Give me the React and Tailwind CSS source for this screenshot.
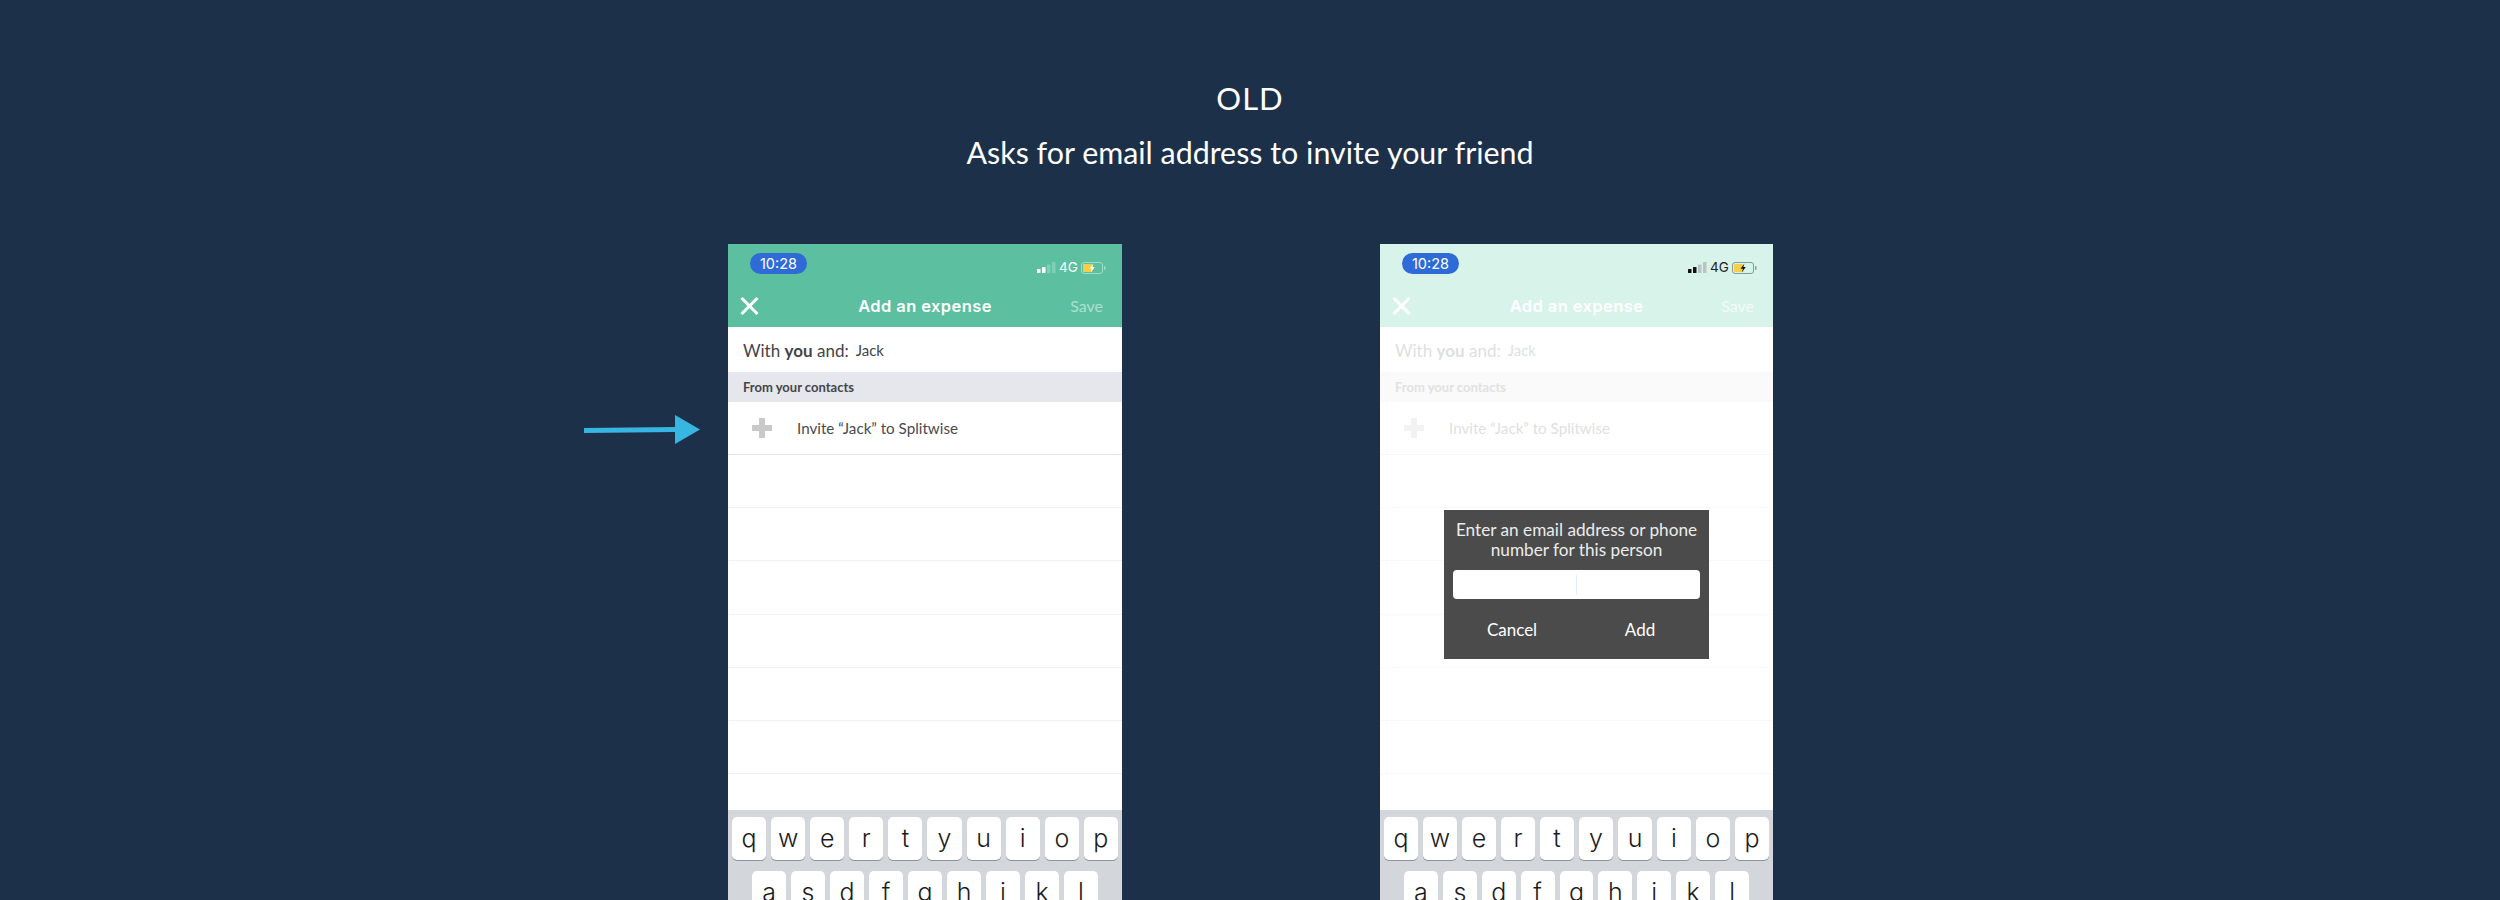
const ROW_ONE = ["q", "w", "e", "r", "t", "y", "u", "i", "o", "p"];
const ROW_TWO = ["a", "s", "d", "f", "g", "h", "j", "k", "l"];
const EMPTY_ROWS = [1, 2, 3, 4, 5, 6];

const Arrow = () => (
  <svg width="118" height="30" viewBox="0 0 118 30" className="mt-[171px] shrink-0">
    <polygon points="0,13 92,12 92,17 0,18" fill="#38b6e2" />
    <polygon points="91,0 116,14.5 91,29" fill="#38b6e2" />
  </svg>
);

const StatusIcons = ({ faded }) => {
  const main = faded ? "#111111" : "#ffffff";
  const dim = faded ? "#b9c4c0" : "#7fd0b6";
  const outline = faded ? "#8b9a94" : "#9ddcc7";
  return (
    <div className="flex items-center">
      <svg width="19" height="12" viewBox="0 0 19 12">
        <rect x="0" y="7" width="3.5" height="4" rx="0.5" fill={main} />
        <rect x="5" y="5" width="3.5" height="6" rx="0.5" fill={main} />
        <rect x="10" y="2.5" width="3.5" height="8.5" rx="0.5" fill={dim} />
        <rect x="15" y="0" width="3.5" height="11" rx="0.5" fill={dim} />
      </svg>
      <span className={`ml-[3px] w-[19px] font-[Inter,sans-serif] text-[13.5px] leading-none ${faded ? "text-[#222222]" : "text-white"}`}>
        4G
      </span>
      <svg width="25" height="12" viewBox="0 0 25 12" className="ml-[3px]">
        <rect x="0.5" y="0.5" width="21" height="11" rx="2.5" fill="none" stroke={outline} />
        <rect x="2" y="2" width="9.5" height="8" rx="1" fill="#f7cf47" />
        <rect x="23" y="4" width="1.5" height="4" rx="0.7" fill={outline} />
        <polygon points="12.5,1.5 8.5,6.8 11,6.8 9.7,10.5 13.8,5 11.3,5" fill={main} />
      </svg>
    </div>
  );
};

const Key = ({ label }) => (
  <div className="flex h-[43px] flex-1 items-center justify-center rounded-[5px] bg-white pb-[1px] font-[Inter,sans-serif] text-[25px] font-light leading-none text-[#1c1c1e] shadow-[0_1px_0_#8f9296]">
    {label}
  </div>
);

const Phone = ({ faded }) => (
  <div className={`relative flex h-[656px] shrink-0 flex-col bg-white ${faded ? "w-[393px]" : "w-[394px]"}`}>
    {/* Green header */}
    <div className={`h-[83px] pt-[9px] ${faded ? "bg-[#d8f3ea]" : "bg-[#5cbf9f]"}`}>
      <div className="flex h-[21px] items-center justify-between pl-[22px] pr-[16px]">
        <div className="flex h-[21px] w-[57px] items-center justify-center rounded-full bg-[#2e6bd6] font-[Inter,sans-serif] text-[14.5px] text-white">
          10:28
        </div>
        <div className="mt-[9px]">
          <StatusIcons faded={faded} />
        </div>
      </div>

      <div className="mt-[14px] grid h-[36px] grid-cols-[1fr_auto_1fr] items-center">
        <div className="pl-[12px]">
          <svg width="19" height="18" viewBox="0 0 19 18">
            <path d="M1.5 1 L17.5 17 M17.5 1 L1.5 17" stroke="#ffffff" strokeWidth="3" fill="none" />
          </svg>
        </div>
        <div className="font-[Inter,sans-serif] text-[16.5px] font-semibold tracking-[0.4px] text-white">
          Add an expense
        </div>
        <div className={`pr-[19px] text-right font-[Lato,sans-serif] text-[16px] ${faded ? "text-white/70" : "text-white/50"}`}>
          Save
        </div>
      </div>
    </div>

    {/* Contact search */}
    <div className={`flex h-[45px] items-center pl-[15px] pt-[2px] font-[Lato,sans-serif] ${faded ? "text-[#dfdfdf]" : "text-[#444448]"}`}>
      <span className="text-[17px]">
        With <span className="font-bold">you</span> and:
      </span>
      <span className="ml-[7px] text-[15px]">Jack</span>
    </div>

    <div className={`flex h-[30px] items-center pl-[15px] pt-[2px] font-[Lato,sans-serif] text-[13px] font-bold ${faded ? "bg-[#fafafa] text-[#e2e2e2]" : "bg-[#e6e7ec] text-[#45454a]"}`}>
      From your contacts
    </div>

    <div className={`flex h-[53px] items-center border-b pl-[24px] ${faded ? "border-[#f7f7f7]" : "border-[#e6e6f0]"}`}>
      <svg width="20" height="20" viewBox="0 0 20 20" className="shrink-0">
        <path d="M7 0 H13 V7 H20 V13 H13 V20 H7 V13 H0 V7 H7 Z" fill={faded ? "#f2f2f2" : "#c9c9c9"} />
      </svg>
      <span className={`ml-[25px] font-[Lato,sans-serif] text-[15.2px] ${faded ? "text-[#dfdfdf]" : "text-[#4a4a4e]"}`}>
        Invite “Jack” to Splitwise
      </span>
    </div>

    {EMPTY_ROWS.map((row) => (
      <div key={row} className={`h-[53.2px] border-b ${faded ? "border-[#f8f8f8]" : "border-[#f1f1f5]"}`} />
    ))}

    {/* Keyboard */}
    <div className="mt-auto h-[90px] overflow-hidden bg-[#d3d6db] pt-[7px]">
      <div className="flex gap-[5px] px-[4px]">
        {ROW_ONE.map((k) => (
          <Key key={k} label={k} />
        ))}
      </div>
      <div className="mt-[11px] flex gap-[5px] px-[24px]">
        {ROW_TWO.map((k) => (
          <Key key={k} label={k} />
        ))}
      </div>
    </div>

    {faded && (
      <div className="absolute left-[64px] top-[266px] h-[149px] w-[265px] bg-[#4b4b4b] px-[9px] pt-[10px] font-[Lato,sans-serif] text-[17.2px] text-[#ececec]">
        <p className="text-center leading-[20px]">
          Enter an email address or phone
          <br />
          number for this person
        </p>
        <div className="mt-[10px] flex h-[29px] items-center justify-center rounded-[4px] bg-white">
          <div className="h-[20px] w-px bg-[#e6ecf8]" />
        </div>
        <div className="mt-[20px] flex text-[17px] leading-[22px] text-white">
          <span className="w-[118px] text-center">Cancel</span>
          <span className="ml-[10px] w-[118px] text-center">Add</span>
        </div>
      </div>
    )}
  </div>
);

const App = () => {
  return (
    <div className="h-screen overflow-hidden bg-[#1c304a] pt-[78px]">
      <h1 className="text-center font-[Lato,sans-serif] text-[31px] font-normal leading-[40px] tracking-[1px] text-white">
        OLD
      </h1>
      <h2 className="mt-[14px] text-center font-[Lato,sans-serif] text-[30.4px] font-normal leading-[40px] text-white">
        Asks for email address to invite your friend
      </h2>

      <div className="mt-[72px] flex pl-[584px]">
        <Arrow />
        <div className="ml-[26px]">
          <Phone />
        </div>
        <div className="ml-[258px]">
          <Phone faded />
        </div>
      </div>
    </div>
  );
};

export default App;
